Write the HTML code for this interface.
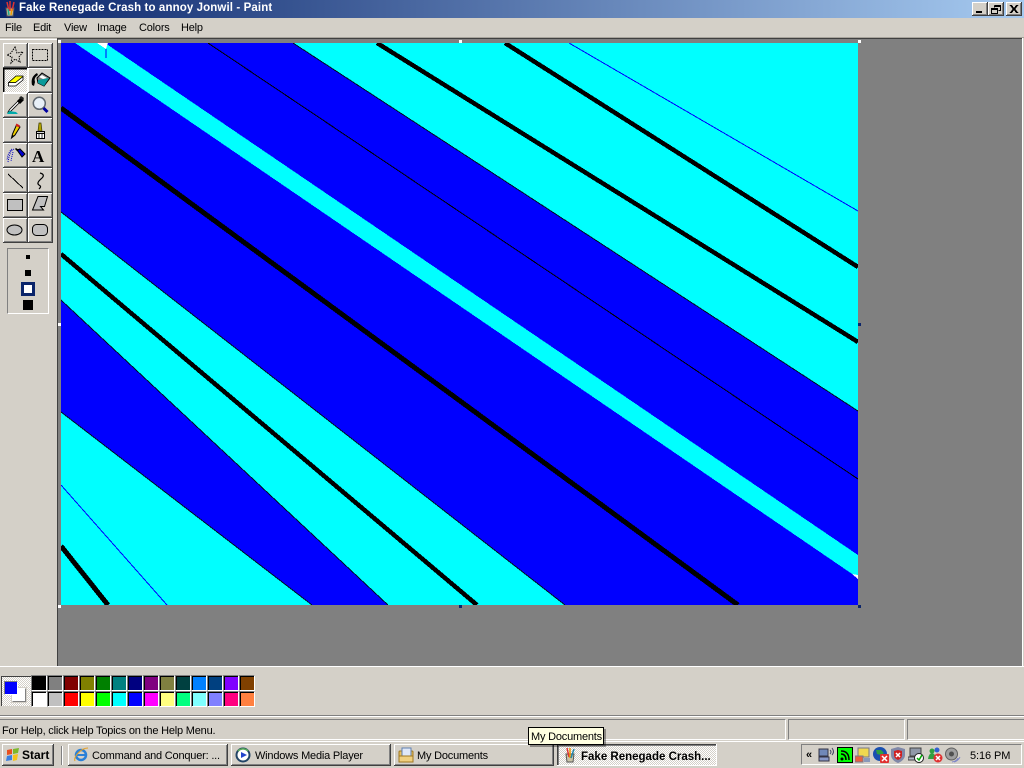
<!DOCTYPE html>
<html><head><meta charset="utf-8"><style>
html,body{margin:0;padding:0;width:1024px;height:768px;overflow:hidden;background:#d4d0c8}
*{box-sizing:border-box}
body{font:11px "Liberation Sans",Arial,sans-serif;color:#000;position:relative}
.a{position:absolute}
.t{position:absolute;white-space:nowrap;line-height:13px;letter-spacing:-.2px}
.btn{position:absolute;background:#d4d0c8;box-shadow:inset -1px -1px 0 #404040,inset 1px 1px 0 #fff,inset -2px -2px 0 #808080}
.tool{position:absolute;width:25px;height:25px;background:#d4d0c8;box-shadow:inset -1px -1px 0 #404040,inset 1px 1px 0 #fff,inset -2px -2px 0 #808080}
.tool svg{position:absolute;left:0;top:0}
.c{position:absolute;width:16px;height:16px;border:1px solid;border-color:#808080 #fff #fff #808080;box-shadow:inset 1px 1px 0 #000}
.sink{position:absolute;border:1px solid;border-color:#808080 #fff #fff #808080}
</style></head><body>

<svg class="a" style="left:0;top:0" width="0" height="0"><defs><pattern id="ck" width="2" height="2" patternUnits="userSpaceOnUse"><rect width="2" height="2" fill="#d4d0c8"/><rect width="1" height="1" fill="#fff"/><rect x="1" y="1" width="1" height="1" fill="#fff"/></pattern></defs></svg>

<!-- title bar -->
<div class="a" style="left:0;top:0;width:1024px;height:18px;background:linear-gradient(90deg,#0a246a,#a6caf0)"></div>
<svg class="a" style="left:2px;top:1px" width="16" height="16" viewBox="0 0 16 16"><path d="M4 7h8l-1 8H5z" fill="#c9c4a8" stroke="#555"/><path d="M5 1l2 9M8 0v10M12 1l-2 9" stroke="#d33" stroke-width="1.500"/><path d="M6 8l1 6" stroke="#2a8" stroke-width="1.500"/><path d="M10 8l-1 6" stroke="#e90" stroke-width="1.500"/></svg>
<div class="t" style="left:19px;top:2px;color:#fff;font-weight:bold;font-size:11.5px;letter-spacing:.11px">Fake Renegade Crash to annoy Jonwil - Paint</div>
<div class="btn" style="left:972px;top:2px;width:16px;height:14px"><div class="a" style="left:4px;top:9px;width:6px;height:2px;background:#000"></div></div>
<div class="btn" style="left:988px;top:2px;width:16px;height:14px"><svg class="a" style="left:0;top:0" width="16" height="14"><path d="M6.500 3.500h6v5h-2M6 4.500h7M6.500 3.500v2" stroke="#000" fill="none" shape-rendering="crispEdges"/><path d="M3.500 6.500h6v5h-6zM3.500 7.500h6" stroke="#000" fill="#d4d0c8" shape-rendering="crispEdges"/></svg></div>
<div class="btn" style="left:1006px;top:2px;width:16px;height:14px"><svg class="a" style="left:0;top:0" width="16" height="14"><path d="M4 3l7 8M5 3l7 8M11 3l-7 8M12 3l-7 8" stroke="#000" shape-rendering="crispEdges"/></svg></div>

<!-- menu -->
<div class="t" style="left:5px;top:22px">File</div>
<div class="t" style="left:33px;top:22px">Edit</div>
<div class="t" style="left:64px;top:22px">View</div>
<div class="t" style="left:97px;top:22px">Image</div>
<div class="t" style="left:139px;top:22px">Colors</div>
<div class="t" style="left:181px;top:22px">Help</div>
<div class="a" style="left:0;top:37px;width:1024px;height:1px;background:#a8a49c"></div>
<div class="a" style="left:0;top:39px;width:57px;height:1px;background:#fff"></div>

<!-- workspace -->
<div class="a" style="left:57px;top:38px;width:965px;height:628px;background:#808080;border-left:1px solid #404040;border-top:1px solid #404040"></div>
<div class="a" style="left:1022px;top:38px;width:1px;height:629px;background:#fff"></div>
<div class="a" style="left:0;top:666px;width:1024px;height:1px;background:#fff"></div>

<!-- canvas -->
<svg class="a" style="left:0;top:0" width="1024" height="768" viewBox="0 0 1024 768">
<defs><clipPath id="cv"><rect x="61" y="43" width="797" height="562"/></clipPath></defs>
<g clip-path="url(#cv)" shape-rendering="crispEdges">
<rect x="61" y="43" width="797" height="562" fill="#0ff"/>
<polygon points="105,43 293,43 858,411 858,555" fill="#00f"/>
<polygon points="61,43 75,43 858,578 858,605 565,605 61,212" fill="#00f"/>
<polygon points="61,300 388,605 312,605 61,412" fill="#00f"/>
<path d="M293 43L858 411M61 212L565 605M61 300L388 605M61 412L312 605" stroke="#000" stroke-width="1" fill="none" opacity=".85"/>
<path d="M208 43L858 479" stroke="#000" stroke-width="1" fill="none"/>
<path d="M569 43L858 211" stroke="#00f" stroke-width="1" fill="none"/>
<path d="M61 485L167 605" stroke="#00f" stroke-width="1" fill="none"/>
<path d="M61 108L738 605" stroke="#000" stroke-width="5" fill="none"/>
<path d="M377 43L858 342" stroke="#000" stroke-width="4.500" fill="none"/>
<path d="M505 43L858 267" stroke="#000" stroke-width="4.500" fill="none"/>
<path d="M61 254L477 605" stroke="#000" stroke-width="4.500" fill="none"/>
<path d="M61 546L108 605" stroke="#000" stroke-width="5" fill="none"/>
<polygon points="97,43 108,43 106,49" fill="#fff"/>
<path d="M106 49L106 58" stroke="#00f" fill="none"/>
<polygon points="852,574 858,575 858,579" fill="#fff"/>
</g>
<!-- handles -->
<g shape-rendering="crispEdges">
<rect x="58" y="40" width="3" height="3" fill="#fff"/><rect x="459" y="40" width="3" height="3" fill="#fff"/><rect x="858" y="40" width="3" height="3" fill="#fff"/>
<rect x="58" y="323" width="3" height="3" fill="#fff"/><rect x="858" y="323" width="3" height="3" fill="#0a246a"/>
<rect x="58" y="605" width="3" height="3" fill="#fff"/><rect x="459" y="605" width="3" height="3" fill="#0a246a"/><rect x="858" y="605" width="3" height="3" fill="#0a246a"/>
</g>
</svg>

<!-- toolbox -->
<div class="tool" style="left:3px;top:43px"><svg width="25" height="25"><path d="M12 4l2 6 6-1-4 5 1 5-5-3-4 4 1-6-5-2 4-2z" fill="none" stroke="#000" stroke-dasharray="1.500 1"/></svg></div>
<div class="tool" style="left:28px;top:43px"><svg width="25" height="25"><rect x="4.500" y="6.500" width="15" height="11" fill="none" stroke="#000" stroke-dasharray="2 1" shape-rendering="crispEdges"/></svg></div>
<div class="tool" style="left:3px;top:68px;box-shadow:none"><svg width="25" height="25"><rect width="25" height="25" fill="url(#ck)"/><path d="M0 25V0h25" fill="none" stroke="#000" stroke-width="3"/><path d="M25 0v25H0" fill="none" stroke="#fff" stroke-width="2"/><path d="M5.500 14.500v3.500h7l7.500-6v-3.500l-7.500 6z" fill="#fff" stroke="#000" stroke-width=".8" stroke-linejoin="round"/><path d="M5.500 14.500l7.500-6.500h7v.5l-7.500 6h-7z" fill="#ff0" stroke="#000" stroke-width=".8" stroke-linejoin="round"/></svg></div>
<div class="tool" style="left:28px;top:68px"><svg width="25" height="25"><path d="M4 17c-1-5 0-9 5-12l1 2c-3 2-4 4-3 7l-1 4z" fill="#000"/><path d="M9 10l5-5 8 5-6 8-6-3z" fill="#808080" stroke="#000"/><path d="M10 12l11-2-5 8-6-3z" fill="#0a9a9a"/><path d="M11 9l3-2 5 3-4 1z" fill="#fff"/></svg></div>
<div class="tool" style="left:3px;top:93px"><svg width="25" height="25"><path d="M15 8L7 16l-2 3 3-1 8-8z" fill="#fff" stroke="#000" stroke-width=".8"/><path d="M14 8l4-4 3 3-4 4z" fill="#000"/><path d="M16 5l2-2 3 2-1 2z" fill="#222"/><path d="M4 21h11l-2-2-7-1z" fill="#0aa"/></svg></div>
<div class="tool" style="left:28px;top:93px"><svg width="25" height="25"><circle cx="11.300" cy="10.300" r="6" fill="#e8f0f8" stroke="#606870" stroke-width="1.500"/><path d="M15.500 15l4 4" stroke="#0000a0" stroke-width="3"/></svg></div>
<div class="tool" style="left:3px;top:118px"><svg width="25" height="25"><path d="M13.500 7l3.500 2-5 8-3.500 3 1-4z" fill="#f0d000" stroke="#000"/><path d="M13.500 5.500l3.500 2-1 2-3.500-2z" fill="#d02020"/><path d="M8.500 20l1-3 2 1z" fill="#000"/></svg></div>
<div class="tool" style="left:28px;top:118px"><svg width="25" height="25"><path d="M11 5h2l1 8h-4z" fill="#b0a000" stroke="#404000" stroke-width=".7"/><rect x="8.500" y="13.500" width="8" height="2" fill="#d8d8d8" stroke="#000"/><rect x="8.500" y="15.500" width="8" height="5" fill="#fff" stroke="#000"/><path d="M11 16v4M14 16v4" stroke="#000" stroke-width=".8"/></svg></div>
<div class="tool" style="left:3px;top:143px"><svg width="25" height="25"><path d="M14 7l3-1 5 5-3 3z" fill="#0000d0" stroke="#000"/><path d="M13 5l3 2-2 1-2-2z" fill="#000"/><path d="M11 6L8 8 6 14 5 19M9 6L7 8 5 12 4 17M10 9l-1 4-1 5" stroke="#0000c0" stroke-dasharray="1 1" fill="none"/></svg></div>
<div class="tool" style="left:28px;top:143px"><svg width="25" height="25"></svg><span class="t" style="left:4px;top:5px;font:bold 17px/17px 'Liberation Serif',serif;letter-spacing:0">A</span></div>
<div class="tool" style="left:3px;top:168px"><svg width="25" height="25"><path d="M5 6l15 14" stroke="#000" shape-rendering="crispEdges"/></svg></div>
<div class="tool" style="left:28px;top:168px"><svg width="25" height="25"><path d="M12 5c4 1 4 3 2 5s-6 5-3 7c1 1 3 1 0 4" fill="none" stroke="#000" stroke-width="1.200"/></svg></div>
<div class="tool" style="left:3px;top:193px"><svg width="25" height="25"><rect x="4.500" y="6.500" width="15" height="11" fill="#c0c0c0" stroke="#000" shape-rendering="crispEdges"/></svg></div>
<div class="tool" style="left:28px;top:193px"><svg width="25" height="25"><path d="M10 3.500h9.500l-3 10h-4l3 3.500H4.500z" fill="#c0c0c0" stroke="#000"/></svg></div>
<div class="tool" style="left:3px;top:218px"><svg width="25" height="25"><ellipse cx="11.500" cy="12" rx="7.500" ry="5" fill="#c0c0c0" stroke="#000"/></svg></div>
<div class="tool" style="left:28px;top:218px"><svg width="25" height="25"><rect x="4.500" y="6.500" width="15" height="11" rx="4" fill="#c0c0c0" stroke="#000"/></svg></div>

<!-- size box -->
<div class="sink" style="left:7px;top:248px;width:42px;height:66px"></div>
<div class="a" style="left:26px;top:255px;width:4px;height:4px;background:#000"></div>
<div class="a" style="left:25px;top:270px;width:6px;height:6px;background:#000"></div>
<div class="a" style="left:21px;top:282px;width:14px;height:14px;background:#0a246a"></div>
<div class="a" style="left:24px;top:285px;width:8px;height:8px;background:#fff"></div>
<div class="a" style="left:23px;top:300px;width:10px;height:10px;background:#000"></div>

<!-- color box -->
<svg class="a" style="left:1px;top:676px" width="30" height="30"><rect width="30" height="30" fill="url(#ck)"/><path d="M.5 30V.5H30" fill="none" stroke="#404040"/></svg>
<div class="a" style="left:12px;top:688px;width:14px;height:14px;background:#fff;border:1px solid;border-color:#fff #808080 #808080 #fff;box-shadow:0 0 0 1px #d4d0c8"></div>
<div class="a" style="left:4px;top:681px;width:14px;height:14px;background:#00f;border:1px solid;border-color:#808080 #fff #fff #808080"></div>
<div class="c" style="left:31px;top:675px;background:#000"></div><div class="c" style="left:47px;top:675px;background:#808080"></div><div class="c" style="left:63px;top:675px;background:#800000"></div><div class="c" style="left:79px;top:675px;background:#808000"></div><div class="c" style="left:95px;top:675px;background:#008000"></div><div class="c" style="left:111px;top:675px;background:#008080"></div><div class="c" style="left:127px;top:675px;background:#000080"></div><div class="c" style="left:143px;top:675px;background:#800080"></div><div class="c" style="left:159px;top:675px;background:#808040"></div><div class="c" style="left:175px;top:675px;background:#004040"></div><div class="c" style="left:191px;top:675px;background:#0080ff"></div><div class="c" style="left:207px;top:675px;background:#004080"></div><div class="c" style="left:223px;top:675px;background:#8000ff"></div><div class="c" style="left:239px;top:675px;background:#804000"></div>
<div class="c" style="left:31px;top:691px;background:#fff"></div><div class="c" style="left:47px;top:691px;background:#c0c0c0"></div><div class="c" style="left:63px;top:691px;background:#f00"></div><div class="c" style="left:79px;top:691px;background:#ff0"></div><div class="c" style="left:95px;top:691px;background:#0f0"></div><div class="c" style="left:111px;top:691px;background:#0ff"></div><div class="c" style="left:127px;top:691px;background:#00f"></div><div class="c" style="left:143px;top:691px;background:#f0f"></div><div class="c" style="left:159px;top:691px;background:#ffff80"></div><div class="c" style="left:175px;top:691px;background:#00ff80"></div><div class="c" style="left:191px;top:691px;background:#80ffff"></div><div class="c" style="left:207px;top:691px;background:#8080ff"></div><div class="c" style="left:223px;top:691px;background:#ff0080"></div><div class="c" style="left:239px;top:691px;background:#ff8040"></div>

<!-- status bar -->
<div class="a" style="left:0;top:715px;width:1024px;height:1px;background:#808080"></div>
<div class="a" style="left:0;top:716px;width:1024px;height:1px;background:#fff"></div>
<div class="sink" style="left:-2px;top:719px;width:788px;height:21px"></div>
<div class="sink" style="left:788px;top:719px;width:117px;height:21px"></div>
<div class="sink" style="left:907px;top:719px;width:120px;height:21px"></div>
<div class="t" style="left:2px;top:725px">For Help, click Help Topics on the Help Menu.</div>

<!-- taskbar -->
<div class="a" style="left:0;top:741px;width:1024px;height:1px;background:#fff"></div>
<div class="btn" style="left:2px;top:744px;width:52px;height:22px"></div>
<svg class="a" style="left:5px;top:747px" width="16" height="16" viewBox="0 0 16 16"><path d="M2 3l5-1 0 5-5 1z" fill="#e8501e"/><path d="M8 2l6-1-1 5-5 1z" fill="#7cb82a"/><path d="M2 9l5-1 0 5-6 1z" fill="#3a7fe0"/><path d="M8 8l5-1-1 6-4 1z" fill="#f5c31a"/></svg>
<div class="t" style="left:22px;top:749px;font-weight:bold;font-size:12px;letter-spacing:0">Start</div>
<div class="a" style="left:61px;top:746px;width:2px;height:19px;background:#fff;border-left:1px solid #808080"></div>

<div class="btn" style="left:68px;top:744px;width:160px;height:22px"></div>
<svg class="a" style="left:73px;top:747px" width="16" height="16" viewBox="0 0 16 16"><circle cx="8" cy="8" r="5" fill="none" stroke="#2a80d8" stroke-width="2.500"/><path d="M4 8h9" stroke="#2a80d8" stroke-width="2"/><path d="M2 14C0 10 8 1 15 1" fill="none" stroke="#e8a020"/></svg>
<div class="t" style="left:92px;top:750px">Command and Conquer: ...</div>

<div class="btn" style="left:231px;top:744px;width:160px;height:22px"></div>
<svg class="a" style="left:235px;top:747px" width="16" height="16" viewBox="0 0 16 16"><circle cx="8" cy="8" r="6.500" fill="#fff" stroke="#246" stroke-width="2"/><path d="M3 4a7 7 0 0 1 10 0" fill="none" stroke="#5a5" stroke-width="1.500"/><path d="M6 5l6 3-6 3z" fill="#24c"/></svg>
<div class="t" style="left:255px;top:750px">Windows Media Player</div>

<div class="btn" style="left:394px;top:744px;width:160px;height:22px"></div>
<svg class="a" style="left:398px;top:747px" width="16" height="16" viewBox="0 0 16 16"><rect x="1" y="4" width="14" height="11" rx="1" fill="#e8c060" stroke="#a07820"/><rect x="4" y="1" width="9" height="8" fill="#dfe8f8" stroke="#6080b0"/><rect x="1" y="9" width="14" height="6" fill="#f0d080" stroke="#a07820"/></svg>
<div class="t" style="left:417px;top:750px">My Documents</div>

<svg class="a" style="left:557px;top:744px" width="160" height="22"><rect width="160" height="22" fill="url(#ck)"/><path d="M.5 22V.5H160" fill="none" stroke="#404040"/><path d="M1.500 21V1.500H159" fill="none" stroke="#808080"/><path d="M159.500 0v21.500H0" fill="none" stroke="#fff"/></svg>
<svg class="a" style="left:562px;top:747px" width="16" height="16" viewBox="0 0 16 16"><path d="M4 7h8l-1 8H5z" fill="#c9c4a8" stroke="#555"/><path d="M5 1l2 9" stroke="#d33" stroke-width="1.500"/><path d="M8 1v10" stroke="#e90" stroke-width="1.500"/><path d="M12 2l-3 9" stroke="#28a" stroke-width="1.500"/></svg>
<div class="t" style="left:581px;top:751px;font-weight:bold;font-size:11.5px;letter-spacing:0">Fake Renegade Crash...</div>

<!-- tray -->
<div class="sink" style="left:801px;top:744px;width:221px;height:21px"></div>
<div class="t" style="left:806px;top:749px;font-weight:bold;font-size:11px">«</div>
<svg class="a" style="left:818px;top:747px" width="18" height="16" viewBox="0 0 18 16"><rect x="1" y="2" width="9" height="7" fill="#7088b8" stroke="#334"/><rect x="1" y="10" width="10" height="4" fill="#8898c8" stroke="#334"/><path d="M12 3q2 2 0 4M14 1q3 4 0 7" fill="none" stroke="#446"/></svg>
<svg class="a" style="left:837px;top:747px" width="16" height="16" viewBox="0 0 16 16"><rect x=".5" y=".5" width="15" height="15" fill="#0f0" stroke="#000"/><circle cx="5" cy="12" r="1.500" fill="#000"/><path d="M4 7q5 0 5 6M4 4q8 0 8 9" fill="none" stroke="#000" stroke-width="1.500"/></svg>
<svg class="a" style="left:855px;top:747px" width="16" height="16" viewBox="0 0 16 16"><rect x="3" y="1" width="11" height="9" fill="#f0d850" stroke="#778"/><rect x="0" y="9" width="8" height="6" fill="#e86040" stroke="#778"/><rect x="9" y="11" width="6" height="4" fill="#8899bb"/></svg>
<svg class="a" style="left:873px;top:747px" width="16" height="16" viewBox="0 0 16 16"><circle cx="7" cy="7" r="7" fill="#1a50b0"/><path d="M3 3h5l3 3-3 2-4-1z" fill="#30a040"/><rect x="7" y="7" width="9" height="9" rx="1" fill="#e03030"/><path d="M9 9l5 5M14 9l-5 5" stroke="#fff" stroke-width="1.500"/></svg>
<svg class="a" style="left:890px;top:747px" width="16" height="16" viewBox="0 0 16 16"><path d="M8 0l7 2v6c0 4-4 7-7 8-3-1-7-4-7-8V2z" fill="#8088a8"/><path d="M8 3l4 1v4c0 3-2 4-4 5-2-1-4-2-4-5V4z" fill="#d02020"/><path d="M6 6l4 4M10 6l-4 4" stroke="#fff" stroke-width="1.500"/></svg>
<svg class="a" style="left:908px;top:747px" width="16" height="16" viewBox="0 0 16 16"><rect x="2" y="1" width="11" height="8" fill="#9098a8" stroke="#444"/><rect x="0" y="10" width="10" height="3" fill="#b0b8c8" stroke="#444"/><circle cx="11" cy="11" r="4.500" fill="#fff" stroke="#222"/><path d="M9 11l2 2 3-5" stroke="#0a0" stroke-width="1.500" fill="none"/></svg>
<svg class="a" style="left:927px;top:747px" width="16" height="16" viewBox="0 0 16 16"><circle cx="5" cy="4" r="2.500" fill="#30a040"/><circle cx="10" cy="3" r="2.500" fill="#3060d0"/><path d="M1 12q1-6 4-6t4 6z" fill="#30a040"/><circle cx="11" cy="11" r="4.500" fill="#e03030"/><path d="M9 9l4 4M13 9l-4 4" stroke="#fff" stroke-width="1.500"/></svg>
<svg class="a" style="left:945px;top:747px" width="16" height="16" viewBox="0 0 16 16"><circle cx="6.500" cy="7" r="6" fill="#a0a0a0" stroke="#606060"/><circle cx="6.500" cy="7" r="2.500" fill="#505050"/><path d="M9 15q4-1 6-5M7 15q5-1 6-4" fill="none" stroke="#8088c8"/></svg>
<div class="t" style="left:970px;top:750px;letter-spacing:-.1px">5:16 PM</div>

<!-- tooltip -->
<div class="a" style="left:530px;top:729px;width:76px;height:18px;background:rgba(0,0,0,.35)"></div>
<div class="a" style="left:528px;top:727px;width:76px;height:18px;background:#ffffe1;border:1px solid #000"></div>
<div class="t" style="left:531px;top:731px">My Documents</div>
</body></html>
